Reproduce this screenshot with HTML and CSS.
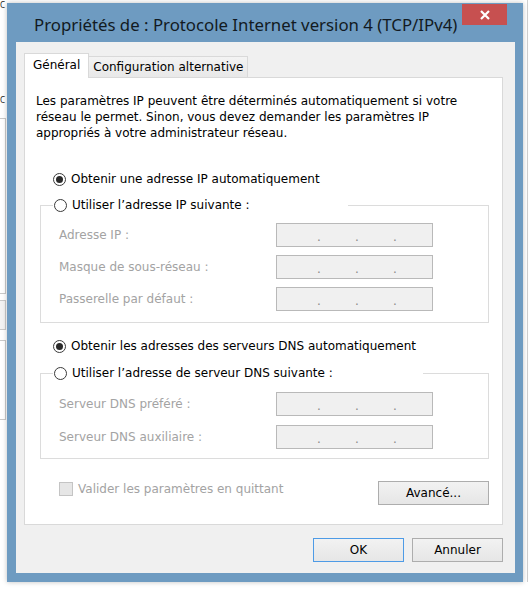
FILE: index.html
```html
<!DOCTYPE html>
<html lang="fr">
<head>
<meta charset="utf-8">
<title>Propriétés de : Protocole Internet version 4 (TCP/IPv4)</title>
<link rel="stylesheet" href="styles.css">
</head>
<body>
<div class="desktop">
  <div class="bgwin">
    <span class="bg-c bg-c1">C</span>
    <span class="bg-c bg-c2">C</span>
    <div class="bg-box bg-box1"></div>
    <div class="bg-box bg-box2"></div>
    <div class="bg-box bg-box3"></div>
    <div class="bg-line"></div>
  </div>

  <div class="dialog">
    <div class="titlebar">
      <span class="title">Propriétés de : Protocole Internet version 4 (TCP/IPv4)</span>
      <div class="close">
        <svg width="10" height="10" viewBox="0 0 10 10"><path d="M1 1 L9 9 M9 1 L1 9" stroke="#fff" stroke-width="2.2" fill="none"/></svg>
      </div>
    </div>

    <div class="client">
      <div class="tabs">
        <div class="tab active">Général</div>
        <div class="tab">Configuration alternative</div>
      </div>

      <div class="panel">
        <p class="intro">Les paramètres IP peuvent être déterminés automatiquement si votre<br>réseau le permet. Sinon, vous devez demander les paramètres IP<br>appropriés à votre administrateur réseau.</p>

        <div class="opt opt-first"><span class="radio on"></span><span>Obtenir une adresse IP automatiquement</span></div>

        <fieldset class="group group-ip">
          <legend class="legend legend-ip"><span class="radio"></span><span>Utiliser l’adresse IP suivante :</span></legend>
          <div class="row"><span class="lbl">Adresse IP :</span><span class="ipbox"><i>.</i><i>.</i><i>.</i></span></div>
          <div class="row"><span class="lbl">Masque de sous-réseau :</span><span class="ipbox"><i>.</i><i>.</i><i>.</i></span></div>
          <div class="row"><span class="lbl">Passerelle par défaut :</span><span class="ipbox"><i>.</i><i>.</i><i>.</i></span></div>
        </fieldset>

        <div class="opt opt-dns"><span class="radio on"></span><span>Obtenir les adresses des serveurs DNS automatiquement</span></div>

        <fieldset class="group group-dns">
          <legend class="legend legend-dns"><span class="radio"></span><span>Utiliser l’adresse de serveur DNS suivante :</span></legend>
          <div class="row"><span class="lbl">Serveur DNS préféré :</span><span class="ipbox"><i>.</i><i>.</i><i>.</i></span></div>
          <div class="row"><span class="lbl">Serveur DNS auxiliaire :</span><span class="ipbox"><i>.</i><i>.</i><i>.</i></span></div>
        </fieldset>

        <div class="footer-row">
          <div class="chk"><span class="box"></span><span>Valider les paramètres en quittant</span></div>
          <div class="btn adv">Avancé...</div>
        </div>
      </div>

      <div class="actions">
        <div class="btn ok">OK</div>
        <div class="btn">Annuler</div>
      </div>
    </div>
  </div>
</div>
</body>
</html>
```

FILE: styles.css
```css
* { box-sizing: border-box; }
html, body { margin: 0; padding: 0; }
body {
  width: 531px;
  height: 589px;
  overflow: hidden;
  background: #ffffff;
  font-family: "DejaVu Sans", sans-serif;
  font-size: 12px;
  color: #000;
}
.desktop { position: relative; width: 531px; height: 589px; }

/* background window glimpses */
.bgwin { position: absolute; inset: 0; }
.bg-c { position: absolute; left: 0; font-family: "Noto Sans", sans-serif; font-size: 8px; line-height: 9px; color: #222; }
.bg-c1 { top: 0; }
.bg-c2 { top: 95px; }
.bg-box { position: absolute; left: -4px; width: 10px; border: 1px solid #c9c9c9; background: #fff; }
.bg-box1 { top: 118px; height: 176px; }
.bg-box2 { top: 300px; height: 30px; background: #f3f3f3; }
.bg-box3 { top: 340px; height: 80px; }
.bg-line { position: absolute; left: 527px; top: 0; width: 1px; height: 582px; background: #cfcfcf; }

/* dialog window */
.dialog {
  position: absolute;
  left: 7px;
  top: 3px;
  width: 516px;
  height: 579px;
  background: #6e9bc1;
  display: flex;
  flex-direction: column;
  box-shadow: 0 0 5px rgba(0,0,0,0.25);
}
.titlebar {
  height: 39px;
  display: flex;
  align-items: flex-start;
  padding-left: 27px;
}
.title {
  font-family: "Noto Sans", sans-serif;
  font-size: 16.8px;
  line-height: 22px;
  color: #121a22;
  margin-top: 11px;
  white-space: nowrap;
}
.close {
  margin-left: auto;
  margin-right: 16px;
  margin-top: 1px;
  width: 45px;
  height: 21px;
  background: #c75050;
  display: flex;
  align-items: center;
  justify-content: center;
  flex: none;
}
.client {
  flex: 1;
  margin: 0 8px 9px 9px;
  background: #f0f0f0;
  padding: 11px 12px 0 8px;
  display: flex;
  flex-direction: column;
}

/* tabs */
.tabs {
  display: flex;
  align-items: flex-end;
  position: relative;
  z-index: 1;
  margin-bottom: -1px;
}
.tab {
  height: 22px;
  line-height: 20px;
  padding: 0 4px 0 4px;
  border: 1px solid #d9d9d9;
  border-left: none;
  background: linear-gradient(#f3f3f3, #e8e8e8);
  white-space: nowrap;
}
.tab.active {
  height: 25px;
  line-height: 22px;
  padding: 0 8px 0 8px;
  border-left: 1px solid #d9d9d9;
  border-right: 1px solid #d9d9d9;
  border-bottom: none;
  background: #fff;
}

.panel {
  width: 479px;
  height: 448px;
  background: #fff;
  border: 1px solid #d9d9d9;
  display: flex;
  flex-direction: column;
}
.intro {
  margin: 15px 0 0 11px;
  line-height: 16px;
  white-space: nowrap;
}

.opt {
  display: flex;
  align-items: center;
  height: 20px;
  margin-left: 28px;
  white-space: nowrap;
}
.opt-first { margin-top: 28px; }
.opt-dns { margin-top: 13px; }

.radio {
  width: 13px;
  height: 13px;
  border: 1px solid #3a3a3a;
  border-radius: 50%;
  background: #fff;
  margin-right: 5px;
  display: flex;
  align-items: center;
  justify-content: center;
  flex: none;
}
.radio.on::after {
  content: "";
  width: 7px;
  height: 7px;
  border-radius: 50%;
  background: #2a2a2a;
}

.group {
  margin: 6px 0 0 15px;
  width: 449px;
  border: 1px solid #dcdcdc;
  padding: 0 0 11px 0;
  min-width: 0;
  display: flex;
  flex-direction: column;
  gap: 8px;
}
.group-dns { margin-top: 7px; gap: 9px; padding-bottom: 9px; }
.legend {
  display: flex;
  align-items: center;
  height: 20px;
  padding: 0 0 0 1px;
  margin-left: 12px;
  white-space: nowrap;
}
.legend-ip { width: 295px; }
.legend-dns { width: 370px; }

.row {
  display: grid;
  grid-template-columns: 217px 157px;
  align-items: center;
  height: 24px;
  padding-left: 18px;
}
.group-ip .row:first-of-type { margin-top: 8px; }
.group-dns .row:first-of-type { margin-top: 9px; }
.lbl { color: #a3a3a3; white-space: nowrap; }
.ipbox {
  height: 24px;
  border: 1px solid #b9b9b9;
  background: #f0f0f0;
  display: flex;
  padding-left: 40px;
  gap: 34px;
  align-items: center;
  color: #8a8a8a;
}
.ipbox i { font-style: normal; width: 4px; text-align: center; margin-top: 4px; }

.footer-row {
  display: flex;
  justify-content: space-between;
  align-items: flex-start;
  margin: 22px 13px 0 34px;
}
.chk {
  display: flex;
  align-items: center;
  color: #a3a3a3;
  height: 16px;
  white-space: nowrap;
}
.box {
  width: 14px;
  height: 14px;
  border: 1px solid #c4c4c4;
  background: #e6e6e6;
  margin-right: 5px;
  flex: none;
}

.btn {
  height: 24px;
  border: 1px solid #adadad;
  background: linear-gradient(#f2f2f2, #e6e6e6);
  display: flex;
  align-items: center;
  justify-content: center;
  color: #000;
}
.adv { width: 111px; }

.actions {
  display: flex;
  justify-content: flex-end;
  gap: 8px;
  margin-top: 13px;
}
.actions .btn { width: 91px; }
.btn.ok { border-color: #4e9be6; }
```
